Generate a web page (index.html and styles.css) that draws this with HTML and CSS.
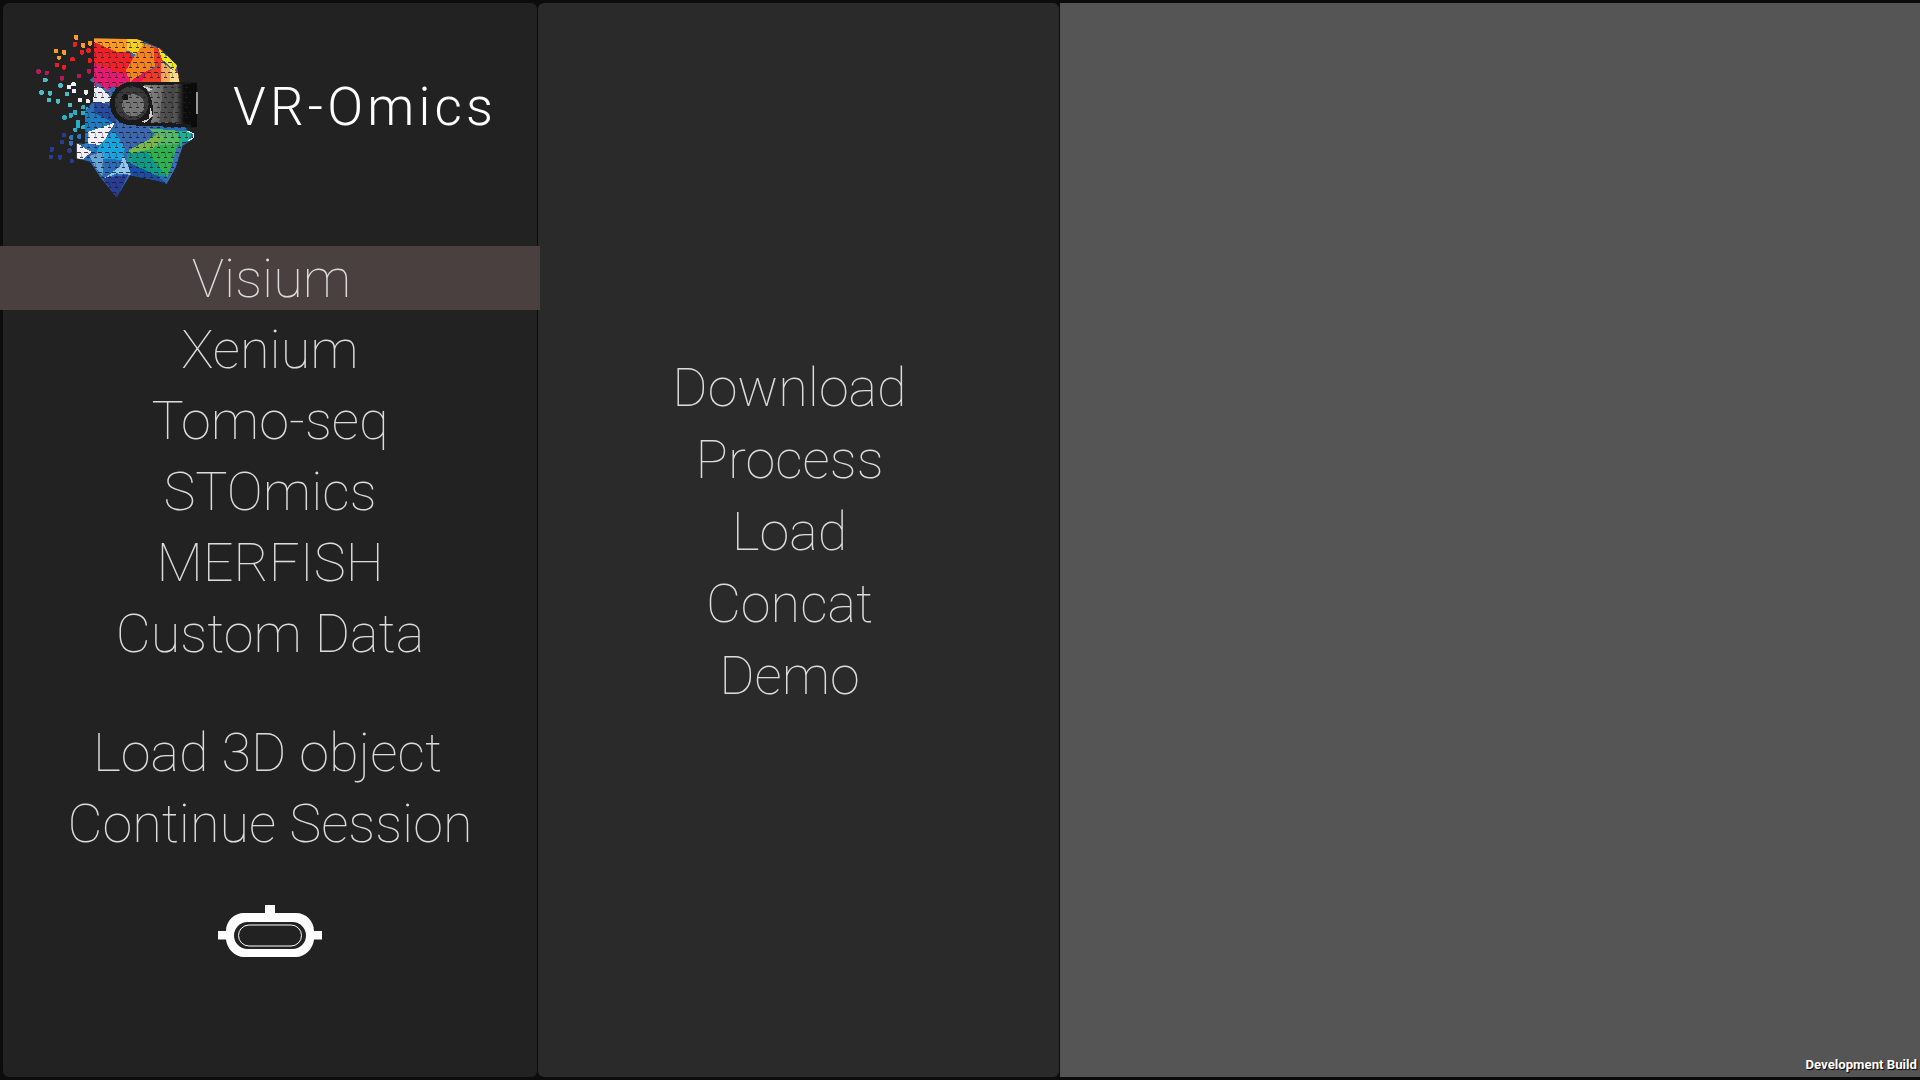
FILE: index.html
```html
<!DOCTYPE html>
<html lang="en">
<head>
<meta charset="utf-8">
<title>VR-Omics</title>
<link rel="stylesheet" href="styles.css">
</head>
<body>
<div class="app">
  <aside class="panel side">
    <header class="brand">
      <svg class="logo" viewBox="0 0 600 570" aria-hidden="true">
        <defs>
          <pattern id="cells" width="21" height="30" patternUnits="userSpaceOnUse">
            <rect x="2" y="5" width="12" height="3" fill="#1c1c22" fill-opacity=".85"/>
            <rect x="13" y="20" width="12" height="3" fill="#1c1c22" fill-opacity=".85"/>
            <rect x="0" y="8" width="21" height="1.500" fill="#1c1c22" fill-opacity=".15"/>
            <rect x="0" y="23" width="21" height="1.500" fill="#1c1c22" fill-opacity=".15"/>
            <rect x="15" y="9" width="1.500" height="11" fill="#1c1c22" fill-opacity=".3"/>
            <rect x="5" y="24" width="1.500" height="6" fill="#1c1c22" fill-opacity=".3"/>
          </pattern>
          <clipPath id="head"><path d="M222 55L350 58 375 66 420 85 470 135 478 186 500 330 520 340 520 355 488 378 468 440 440 492 415 482 330 466 290 532 240 470 210 425 170 415 170 370 196 372 195 275 222 240 222 190 208 180 222 170z"/></clipPath>
          <linearGradient id="band" x1="0" x2="1"><stop offset="0" stop-color="#8a8a8a"/><stop offset=".4" stop-color="#6a6a6a"/><stop offset=".68" stop-color="#505050"/><stop offset=".84" stop-color="#0c0c0c"/></linearGradient>
        </defs>
        <g class="dots">
          <g fill="#ff9a22">
            <rect x="162" y="46" width="13" height="13"/><rect x="183" y="70" width="13" height="13"/><rect x="204" y="64" width="12" height="13"/><rect x="101" y="87" width="13" height="12"/><rect x="126" y="91" width="13" height="13"/><rect x="111" y="107" width="12" height="12"/>
          </g>
          <g fill="#ef1c24">
            <rect x="158" y="67" width="13" height="13"/><rect x="180" y="91" width="12" height="13"/><rect x="199" y="85" width="13" height="13"/><rect x="151" y="112" width="13" height="12"/><rect x="106" y="129" width="12" height="12"/><rect x="126" y="136" width="12" height="13"/><rect x="203" y="115" width="12" height="13"/>
          </g>
          <g fill="#b31a5c">
            <rect x="49" y="148" width="13" height="13"/><rect x="74" y="152" width="13" height="12"/><rect x="120" y="169" width="12" height="13"/><rect x="171" y="162" width="12" height="12"/><rect x="201" y="148" width="12" height="13"/>
          </g>
          <g fill="#4cbcc0">
            <rect x="70" y="174" width="13" height="12"/><rect x="58" y="211" width="13" height="13"/><rect x="84" y="214" width="12" height="13"/><rect x="80" y="235" width="13" height="12"/><rect x="108" y="238" width="12" height="13"/><rect x="115" y="190" width="13" height="13"/><rect x="136" y="216" width="12" height="12"/><rect x="144" y="248" width="12" height="13"/>
          </g>
          <g fill="#eeeef8">
            <rect x="141" y="195" width="12" height="12"/><rect x="154" y="187" width="13" height="12"/><rect x="156" y="208" width="13" height="12"/><rect x="192" y="210" width="12" height="14"/><rect x="175" y="234" width="12" height="12"/><rect x="197" y="238" width="12" height="12"/><rect x="219" y="232" width="12" height="12"/>
          </g>
          <g fill="#28afc4">
            <rect x="184" y="256" width="12" height="12"/><rect x="197" y="262" width="13" height="13"/><rect x="159" y="271" width="13" height="13"/><rect x="146" y="280" width="13" height="13"/><rect x="127" y="286" width="13" height="13"/><rect x="184" y="272" width="13" height="13"/><rect x="169" y="300" width="12" height="24"/><rect x="184" y="316" width="13" height="12"/><rect x="159" y="323" width="13" height="12"/>
          </g>
          <g fill="#2f73bb">
            <rect x="148" y="346" width="12" height="13"/><rect x="172" y="343" width="12" height="13"/><rect x="147" y="364" width="12" height="13"/>
          </g>
          <g fill="#283c93">
            <rect x="125" y="338" width="13" height="13"/><rect x="121" y="360" width="12" height="12"/><rect x="89" y="382" width="13" height="13"/><rect x="142" y="385" width="13" height="13"/><rect x="86" y="404" width="13" height="12"/><rect x="114" y="406" width="12" height="13"/><rect x="149" y="417" width="12" height="12"/>
          </g>
        </g>
        <g clip-path="url(#head)">
          <rect x="160" y="40" width="380" height="500" fill="#2b6db5"/>
          <rect x="222" y="150" width="260" height="50" fill="#e31a50"/>
          <path fill="#ff9a1e" d="M215 50H368L370 74 330 92 290 100 240 78 215 65z"/>
          <path fill="#ee2028" d="M215 62L240 74 290 96 330 96 345 125 322 152 300 172 215 130z"/>
          <path fill="#ee3a28" d="M385 76L428 88 430 190H360L380 160 410 140z"/>
          <path fill="#f3821f" d="M362 68L400 78 405 140 350 170 325 190 318 150 346 104z"/>
          <path fill="#f5d020" d="M320 58H362L368 76 346 104 320 88z"/>
          <path fill="#e31a70" d="M215 128L290 155 330 172 330 190 272 200 262 218 215 170z"/>
          <path fill="#f9e616" d="M415 85L472 135 464 154 440 130 426 118z"/>
          <path fill="#f7a85c" d="M424 122L452 148 456 190H424z"/>
          <path fill="#f8dc86" d="M450 146L480 160V195H448z"/>
          <path fill="#4f6cb0" d="M205 175L275 215 268 250 240 225 222 190z"/>
          <path fill="#eceef8" d="M219 198L246 205 275 236 262 250 219 248z"/>
          <path fill="#274a9c" d="M222 245L272 255 290 305 255 312 222 282z"/>
          <path fill="#1f7cc0" d="M192 275L224 280 285 310 250 322 238 332 205 348 192 300z"/>
          <path fill="#3c66ae" d="M288 305L405 322 392 352 325 388 310 398z"/>
          <path fill="#1f7cc0" d="M192 340L210 335V375H192z"/>
          <path fill="#f4f0fa" d="M205 335L285 308 262 345 250 375 205 372z"/>
          <path fill="#16a3de" d="M285 335L315 385 312 395 310 422 250 416 230 395 240 375 275 338z"/>
          <path fill="#2f7abf" d="M192 372L232 376 216 402 192 406z"/>
          <path fill="#f5f0fa" d="M168 368L195 385 216 396 190 416H168z"/>
          <path fill="#68a5d6" d="M208 408L250 395 252 420 292 430 250 472 224 440z"/>
          <path fill="#2b6db5" d="M250 416L311 420 300 448 268 460 248 476z"/>
          <path fill="#8fc5ee" d="M310 405L338 465 290 460 248 478 300 440z"/>
          <path fill="#283c93" d="M248 474L324 464 290 535z"/>
          <path fill="#1d4da2" d="M320 425L405 462 445 495 395 482 335 468z"/>
          <path fill="#0f9a88" d="M322 398L372 385 442 472 405 465 322 425z"/>
          <path fill="#2fb04e" d="M372 385L410 330 478 335 487 378 465 402 442 472z"/>
          <path fill="#55b868" d="M385 325L482 333 478 372 400 378 410 345z"/>
          <path fill="#7ab648" d="M325 392L410 345 430 350 400 385 372 392 335 400z"/>
          <path fill="#1fae8e" d="M470 332L518 332 505 362 480 372z"/>
          <path fill="#3e6fb6" d="M465 402L472 375 488 378 465 442 442 492z"/>
          <rect x="170" y="50" width="360" height="490" fill="url(#cells)"/>
        </g>
        <path d="M500 333L520 340 520 354 505 362" fill="none" stroke="#dff8ee" stroke-width="3"/>
        <path d="M335 186H525Q532 186 532 194V314Q532 324 522 323L335 316a65 65 0 0 1 0-130z" fill="#1a1a1a"/>
        <path d="M372 196L515 192V312L392 308Q412 250 372 196z" fill="url(#band)"/>
        <path d="M430 198H468L456 306H418z" fill="#3c3c3c" fill-opacity=".55"/>
        <rect x="372" y="190" width="155" height="125" fill="url(#cells)"/>
        <rect x="512" y="190" width="20" height="130" fill="#0c0c0c"/>
        <circle cx="335" cy="250" r="51" fill="#3a3a3a"/>
        <circle cx="340" cy="256" r="33" fill="#767676"/>
        <circle cx="316" cy="232" r="9" fill="#151515"/>
        <circle cx="335" cy="250" r="51" fill="url(#cells)"/>
        <path d="M366 196L398 208 386 214zM386 296L392 262 398 288 376 308 362 306z" fill="#cfcfcf"/>
        <rect x="528" y="215" width="5" height="68" fill="#9a9a9a"/>
      </svg>
      <h1 class="title">VR-Omics</h1>
    </header>
    <nav class="menu">
      <a class="item active">Visium</a>
      <a class="item">Xenium</a>
      <a class="item">Tomo-seq</a>
      <a class="item">STOmics</a>
      <a class="item">MERFISH</a>
      <a class="item">Custom Data</a>
    </nav>
    <nav class="menu secondary">
      <a class="item shift">Load 3D object</a>
      <a class="item">Continue Session</a>
    </nav>
    <svg class="headset" viewBox="0 0 140 80" aria-hidden="true">
      <path fill="#fff" d="M65 15H75V23H96C106 23 114 31 114 41H122V49.500H114C113 59 105 67 96 67H44C35 67 27 59 26 49.500H18V41H26C26 31 34 23 44 23H65z"/>
      <rect x="34" y="32" width="72" height="27" rx="13.5" fill="#222"/>
      <rect x="38.500" y="35" width="63" height="21" rx="10.500" fill="none" stroke="#fff" stroke-width="1"/>
    </svg>
  </aside>
  <section class="panel middle">
    <a class="item">Download</a>
    <a class="item">Process</a>
    <a class="item">Load</a>
    <a class="item">Concat</a>
    <a class="item">Demo</a>
  </section>
  <main class="canvas">
    <span class="build">Development Build</span>
  </main>
</div>
</body>
</html>
```
FILE: styles.css
```css
* { box-sizing: border-box; }
html, body { margin: 0; height: 100%; overflow: hidden; }
body { background: #0c0c0c; font-family: Roboto, "Liberation Sans", sans-serif; }
.app { display: flex; height: 1080px; padding: 3px 0; }
.panel { border-radius: 6px; display: flex; flex-direction: column; }
.side { width: 534px; margin-left: 3px; background: #222222; }
.middle { width: 521px; margin-left: 1px; background: #2a2a2a; padding: 352px 18px 0 0; gap: 8px; }
.canvas { flex: 1; margin-left: 1px; background: #555555; position: relative; }
.brand { height: 243px; display: flex; align-items: flex-start; }
.logo { width: 200px; height: 190px; margin: 17px 0 0 17px; flex: none; shape-rendering: crispEdges; }
.dots rect { rx: 3px; }
.title { margin: 72px 0 0 13px; font-size: 53px; line-height: 64px; font-weight: 300; letter-spacing: 4.2px; color: #fff; white-space: nowrap; }
.menu { display: flex; flex-direction: column; gap: 7px; }
.menu.secondary { margin-top: 55px; }
.item { display: block; height: 64px; line-height: 66px; font-size: 54px; font-weight: 100; text-align: center; color: #dcdcdc; }
.active { background: #4a403f; margin: 0 -3px; padding-left: 3px; position: relative; z-index: 1; }
.shift { padding-right: 5px; }
.headset { width: 140px; height: 80px; margin: 35px 0 0 197px; flex: none; }
.build { position: absolute; right: 3px; bottom: 4px; font-size: 13.2px; line-height: 16px; font-weight: 700; color: #fff; text-shadow: 1px 1px 1px #000; }
```
